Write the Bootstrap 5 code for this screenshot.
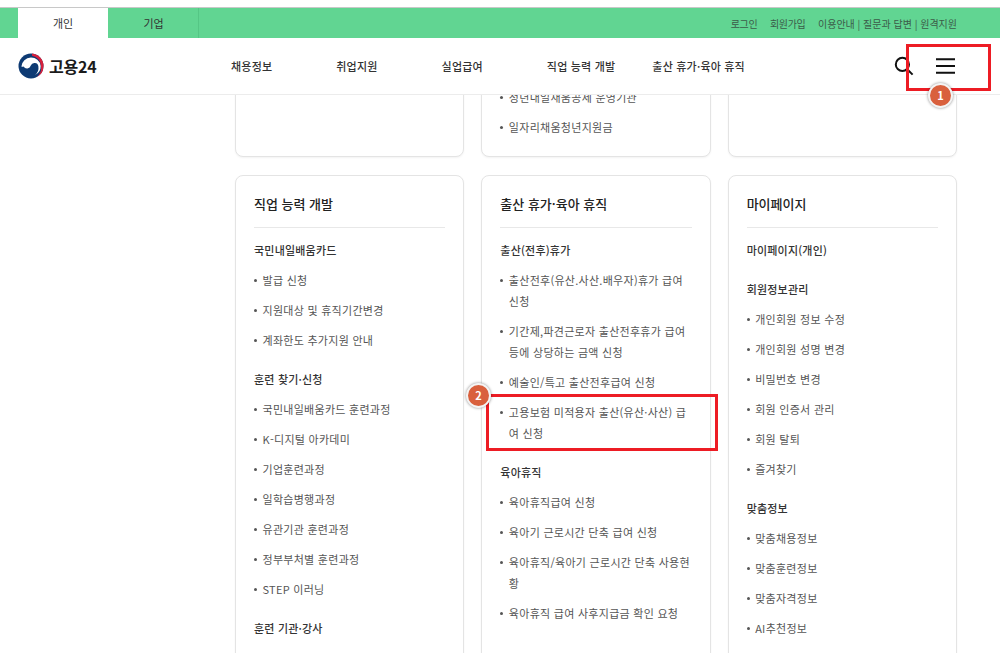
<!DOCTYPE html>
<html lang="ko">
<head>
  <meta charset="UTF-8">
  <meta name="viewport" content="width=device-width, initial-scale=1.0">
  <title>고용24</title>
  <link href="https://cdn.jsdelivr.net/npm/bootstrap@5.3.0/dist/css/bootstrap.min.css" rel="stylesheet">
  <style>
    html, body { height: 653px; overflow: hidden; }
    body {
      background: #fff;
      color: #333;
      font-family: "Noto Sans CJK KR", "Noto Sans", sans-serif;
      font-size: 11px;
      position: relative;
    }
    .page-top { height: 8px; border-bottom: 1px solid #c8c8c8; }
    .util-bar { height: 30px; background: #61d592; padding: 0 43px 0 18px; }
    .util-tab { width: 90px; height: 30px; color: #333; font-size: 11px; border-right: 1px solid #55c685; }
    .util-tab.on { background: #fff; border-right: 0; margin-right: 1px; }
    .util-links { color: #3c5b49; font-size: 10px; gap: 12.5px; }
    .util-short { letter-spacing: -.3px; }
    .site-head {
      height: 57px;
      background: #fff;
      border-bottom: 1px solid #ececec;
    }
    .logo-area { width: 231px; padding-left: 18px; }
    .logo-text { font-size: 16px; font-weight: 700; color: #1b1b1b; margin-left: 5px; letter-spacing: -.2px; }
    .main-nav { font-size: 11px; font-weight: 500; color: #333; gap: 64px; letter-spacing: .2px; }
    .main-nav .last-nav { margin-left: -27px; }
    .head-icons { margin-left: auto; padding-right: 45px; gap: 22px; }
    .page-scroll { height: 558px; overflow: hidden; }
    .menu-wrap { width: 722px; margin-left: 235px; gap: 17px; }
    .menu-wrap .menu-box { flex: 1 1 0; min-width: 0; }
    .upper-row { height: 100px; margin-top: -38px; margin-bottom: 18px; }
    .lower-row { height: 700px; }
    .menu-box {
      border: 1px solid #e4e4e4;
      border-radius: 8px;
      box-shadow: 0 1px 2px rgba(0,0,0,.05);
      padding: 0 18px;
      background: #fff;
    }
    .upper-row .menu-box { display: flex; flex-direction: column; justify-content: flex-end; padding-bottom: 9px; overflow: hidden; }
    .box-title {
      font-size: 13px;
      font-weight: 500;
      color: #222;
      margin: 0 0 12px;
      height: 52px;
      line-height: 55px;
      border-bottom: 1px solid #e8e8e8;
    }
    .sub-title { font-size: 11px; font-weight: 500; color: #333; line-height: 21px; margin: 0 0 9px; letter-spacing: .2px; }
    .sub-alone { margin-bottom: 18px; }
    .menu-list { margin: 0 0 18px; padding: 0; list-style: none; }
    .menu-list li {
      position: relative;
      padding-left: 8.5px;
      font-size: 11px;
      line-height: 21px;
      margin-bottom: 9px;
      color: #555;
      letter-spacing: .28px;
    }
    .menu-list li::before {
      content: "";
      position: absolute;
      left: 0;
      top: 9px;
      width: 3px;
      height: 3px;
      border-radius: 50%;
      background: #555;
    }
    .upper-row .menu-list { margin: 0; }
    .mark-box { position: absolute; border: 3px solid #ed1c24; z-index: 3; }
    .mark-one { left: 906px; top: 44px; width: 85px; height: 47px; }
    .mark-two { left: 486px; top: 394px; width: 232px; height: 57px; }
    .step-dot {
      position: absolute;
      width: 25px;
      height: 25px;
      border-radius: 50%;
      background: #d9603d;
      border: 2px solid #f4f4f4;
      box-shadow: 0 0 3px rgba(0,0,0,.45);
      color: #fff;
      font-size: 11px;
      font-weight: 700;
      z-index: 4;
    }
    .step-one { left: 928px; top: 83px; }
    .step-two { left: 466px; top: 383px; }
  </style>
</head>
<body>
  <div class="page-top"></div>
  <div class="util-bar d-flex align-items-center">
    <div class="util-tab on d-flex align-items-center justify-content-center">개인</div>
    <div class="util-tab d-flex align-items-center justify-content-center">기업</div>
    <div class="util-links d-flex ms-auto">
      <span class="util-short">로그인</span><span class="util-short">회원가입</span><span>이용안내 | 질문과 답변 | 원격지원</span>
    </div>
  </div>

  <header class="site-head d-flex align-items-center">
    <div class="logo-area d-flex align-items-center">
      <svg width="26" height="26" viewBox="0 0 26 26">
        <circle cx="13" cy="13" r="12.5" fill="#0d3a73"/>
        <path d="M3.4 13.5A9.7 9.7 0 0 1 22.7 13 9.7 9.7 0 0 1 17 22 9 9 0 0 0 20.4 13.5 3.9 3.9 0 0 0 12.8 12.6 3.9 3.9 0 0 1 5.6 13.4 3 3 0 0 1 3.4 13.5Z" fill="#fff"/>
        <path d="M14 .6A12.5 12.5 0 0 1 25.5 13 12.5 12.5 0 0 1 18.6 24.2 11.8 11.8 0 0 0 23 13 10.4 10.4 0 0 0 14 2.7Z" fill="#d8203c"/>
      </svg>
      <span class="logo-text">고용24</span>
    </div>
    <nav class="main-nav d-flex">
      <span>채용정보</span><span>취업지원</span><span>실업급여</span><span>직업 능력 개발</span><span class="last-nav">출산 휴가·육아 휴직</span>
    </nav>
    <div class="head-icons d-flex align-items-center">
      <svg width="20" height="20" viewBox="0 0 20 20" fill="none" stroke="#111" stroke-width="2">
        <circle cx="8.4" cy="8.4" r="6.6"/><path d="M13.2 13.2 18.6 18.6"/>
      </svg>
      <svg width="19" height="16" viewBox="0 0 19 16" stroke="#111" stroke-width="2">
        <path d="M0 1.2H19M0 8H19M0 14.8H19"/>
      </svg>
    </div>
  </header>

  <main class="page-scroll">
    <div class="menu-wrap upper-row d-flex">
      <div class="menu-box"></div>
      <div class="menu-box">
        <ul class="menu-list">
          <li>청년내일채움공제 운영기관</li>
          <li>일자리채움청년지원금</li>
        </ul>
      </div>
      <div class="menu-box"></div>
    </div>

    <div class="menu-wrap lower-row d-flex align-items-stretch">
      <section class="menu-box">
        <h2 class="box-title">직업 능력 개발</h2>
        <h3 class="sub-title">국민내일배움카드</h3>
        <ul class="menu-list">
          <li>발급 신청</li>
          <li>지원대상 및 휴직기간변경</li>
          <li>계좌한도 추가지원 안내</li>
        </ul>
        <h3 class="sub-title">훈련 찾기·신청</h3>
        <ul class="menu-list">
          <li>국민내일배움카드 훈련과정</li>
          <li>K-디지털 아카데미</li>
          <li>기업훈련과정</li>
          <li>일학습병행과정</li>
          <li>유관기관 훈련과정</li>
          <li>정부부처별 훈련과정</li>
          <li>STEP 이러닝</li>
        </ul>
        <h3 class="sub-title">훈련 기관·강사</h3>
      </section>
      <section class="menu-box">
        <h2 class="box-title">출산 휴가·육아 휴직</h2>
        <h3 class="sub-title">출산(전후)휴가</h3>
        <ul class="menu-list">
          <li>출산전후(유산.사산.배우자)휴가 급여 신청</li>
          <li>기간제,파견근로자 출산전후휴가 급여 등에 상당하는 금액 신청</li>
          <li>예술인/특고 출산전후급여 신청</li>
          <li>고용보험 미적용자 출산(유산·사산) 급여 신청</li>
        </ul>
        <h3 class="sub-title">육아휴직</h3>
        <ul class="menu-list">
          <li>육아휴직급여 신청</li>
          <li>육아기 근로시간 단축 급여 신청</li>
          <li>육아휴직/육아기 근로시간 단축 사용현황</li>
          <li>육아휴직 급여 사후지급금 확인 요청</li>
        </ul>
      </section>
      <section class="menu-box">
        <h2 class="box-title">마이페이지</h2>
        <h3 class="sub-title sub-alone">마이페이지(개인)</h3>
        <h3 class="sub-title">회원정보관리</h3>
        <ul class="menu-list">
          <li>개인회원 정보 수정</li>
          <li>개인회원 성명 변경</li>
          <li>비밀번호 변경</li>
          <li>회원 인증서 관리</li>
          <li>회원 탈퇴</li>
          <li>즐겨찾기</li>
        </ul>
        <h3 class="sub-title">맞춤정보</h3>
        <ul class="menu-list">
          <li>맞춤채용정보</li>
          <li>맞춤훈련정보</li>
          <li>맞춤자격정보</li>
          <li>AI추천정보</li>
        </ul>
      </section>
    </div>
  </main>

  <div class="mark-box mark-one"></div>
  <div class="mark-box mark-two"></div>
  <div class="step-dot step-one d-flex align-items-center justify-content-center">1</div>
  <div class="step-dot step-two d-flex align-items-center justify-content-center">2</div>
</body>
</html>
